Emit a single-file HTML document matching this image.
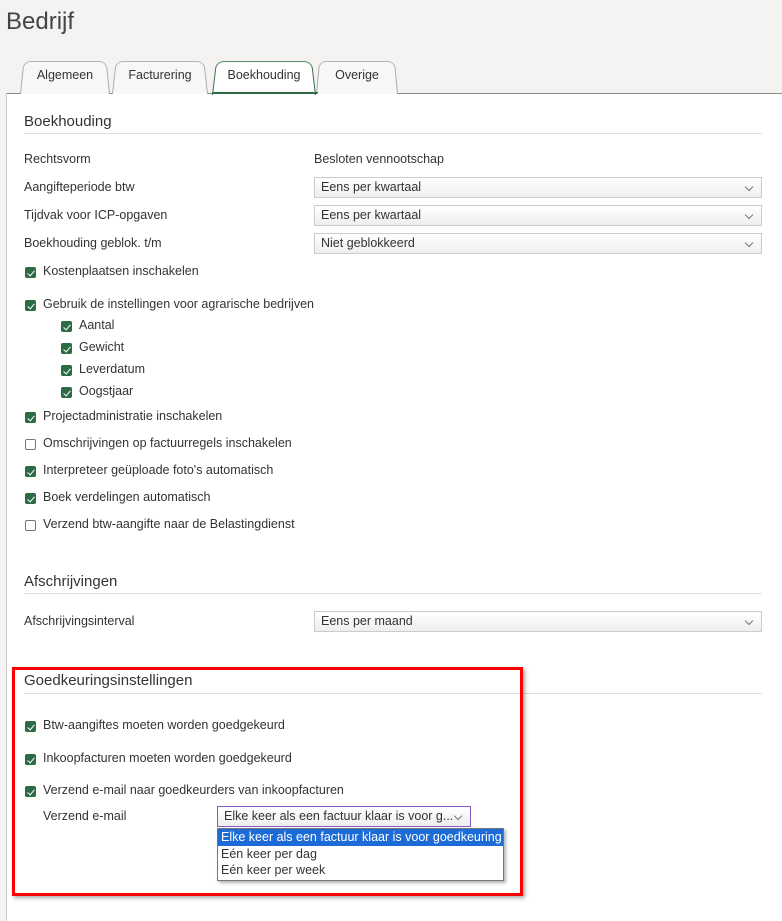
<!DOCTYPE html>
<html><head><meta charset="utf-8"><style>
*{box-sizing:border-box;margin:0;padding:0}
body{width:782px;height:921px;background:#f4f3f1;font-family:"Liberation Sans",sans-serif;font-size:12.5px;color:#333;position:relative;overflow:hidden}
.a{position:absolute;white-space:nowrap}
.t{position:absolute;font-size:12.5px;line-height:16px;white-space:nowrap}
.panel{position:absolute;left:6px;top:93px;width:776px;height:828px;background:#fff;border-left:1px solid #ccc;border-top:1px solid #8a8a8a}
.h{position:absolute;left:24px;font-size:15px;color:#333}
.line{position:absolute;left:24px;width:738px;height:1px;background:#ddd}
.sel{position:absolute;left:314px;width:448px;height:21px;border:1px solid #ccc;background:linear-gradient(#fff,#eee);padding:2px 6px;font-size:12.5px;line-height:15px}
.sel::after{content:"";position:absolute;right:9px;top:6px;width:5px;height:5px;border-right:1px solid #777;border-bottom:1px solid #777;transform:rotate(45deg)}
.cb{position:absolute;width:11px;height:11px;border-radius:2px;background:#2c6b44}
.cb::after{content:"";position:absolute;left:3.5px;top:1.5px;width:3px;height:6px;border-right:1.6px solid #fff;border-bottom:1.6px solid #fff;transform:rotate(40deg)}
.cbo{position:absolute;width:11px;height:11px;border:1px solid #777;border-radius:2px;background:#fff}
.tab{position:absolute;top:58px;height:36px;border:1px solid #aaa;border-bottom:none;border-radius:8px 8px 0 0;background:#f7f7f7;text-align:center;line-height:32px;font-size:12.5px;transform:perspective(60px) rotateX(8deg);transform-origin:bottom}
.tl{position:absolute;top:58px;height:36px;line-height:34px;text-align:center;font-size:12.5px}
</style></head><body>
<div class="a" style="left:6px;top:8px;font-size:24px;color:#444;font-weight:300">Bedrijf</div>
<div class="panel"></div>
<div class="tab" style="left:20px;width:90px"></div>
<div class="tab" style="left:112px;width:96px"></div>
<div class="tab" style="left:316px;width:82px"></div>
<div class="tab" style="left:212px;width:104px;background:#fff;border:1.5px solid #2c6b44;border-bottom:none;height:37px;z-index:2"></div>
<div class="tl" style="left:20px;width:90px">Algemeen</div>
<div class="tl" style="left:112px;width:96px">Facturering</div>
<div class="tl" style="left:212px;width:104px;z-index:3">Boekhouding</div>
<div class="tl" style="left:316px;width:82px">Overige</div>
<div class="a" style="left:212px;top:92px;width:106px;height:2px;background:#2c6b44;border-radius:0 0 4px 4px;z-index:2"></div>

<div class="h" style="top:113px">Boekhouding</div><div class="line" style="top:133px"></div>
<div class="t" style="left:24px;top:151px">Rechtsvorm</div><div class="t" style="left:314px;top:151px">Besloten vennootschap</div>
<div class="t" style="left:24px;top:179px">Aangifteperiode btw</div><div class="sel" style="top:177px">Eens per kwartaal</div>
<div class="t" style="left:24px;top:207px">Tijdvak voor ICP-opgaven</div><div class="sel" style="top:205px">Eens per kwartaal</div>
<div class="t" style="left:24px;top:235px">Boekhouding geblok. t/m</div><div class="sel" style="top:233px">Niet geblokkeerd</div>

<div class="cb" style="left:25px;top:267px"></div><div class="t" style="left:43px;top:263px">Kostenplaatsen inschakelen</div>
<div class="cb" style="left:25px;top:300px"></div><div class="t" style="left:43px;top:296px">Gebruik de instellingen voor agrarische bedrijven</div>
<div class="cb" style="left:61px;top:321px"></div><div class="t" style="left:79px;top:317px">Aantal</div>
<div class="cb" style="left:61px;top:343px"></div><div class="t" style="left:79px;top:339px">Gewicht</div>
<div class="cb" style="left:61px;top:365px"></div><div class="t" style="left:79px;top:361px">Leverdatum</div>
<div class="cb" style="left:61px;top:387px"></div><div class="t" style="left:79px;top:383px">Oogstjaar</div>
<div class="cb" style="left:25px;top:412px"></div><div class="t" style="left:43px;top:408px">Projectadministratie inschakelen</div>
<div class="cbo" style="left:25px;top:439px"></div><div class="t" style="left:43px;top:435px">Omschrijvingen op factuurregels inschakelen</div>
<div class="cb" style="left:25px;top:466px"></div><div class="t" style="left:43px;top:462px">Interpreteer geüploade foto's automatisch</div>
<div class="cb" style="left:25px;top:493px"></div><div class="t" style="left:43px;top:489px">Boek verdelingen automatisch</div>
<div class="cbo" style="left:25px;top:520px"></div><div class="t" style="left:43px;top:516px">Verzend btw-aangifte naar de Belastingdienst</div>

<div class="h" style="top:573px">Afschrijvingen</div><div class="line" style="top:593px"></div>
<div class="t" style="left:24px;top:613px">Afschrijvingsinterval</div><div class="sel" style="top:611px">Eens per maand</div>

<div class="h" style="top:672px">Goedkeuringsinstellingen</div><div class="line" style="top:693px"></div>
<div class="cb" style="left:25px;top:721px"></div><div class="t" style="left:43px;top:717px">Btw-aangiftes moeten worden goedgekeurd</div>
<div class="cb" style="left:25px;top:754px"></div><div class="t" style="left:43px;top:750px">Inkoopfacturen moeten worden goedgekeurd</div>
<div class="cb" style="left:25px;top:786px"></div><div class="t" style="left:43px;top:782px">Verzend e-mail naar goedkeurders van inkoopfacturen</div>
<div class="t" style="left:43px;top:808px">Verzend e-mail</div>
<div class="sel" style="left:217px;top:806px;width:254px;height:21px;border-color:#8a5bc4">Elke keer als een factuur klaar is voor g...</div>
<div class="a" style="left:217px;top:828px;width:287px;height:53px;border:1px solid #777;background:#fff;box-shadow:2px 2px 3px rgba(0,0,0,.3);font-size:12.5px;line-height:16.5px">
<div style="background:#1c6bd6;color:#fff;padding-left:3px">Elke keer als een factuur klaar is voor goedkeuring</div>
<div style="padding-left:3px">Eén keer per dag</div>
<div style="padding-left:3px">Eén keer per week</div>
</div>
<div class="a" style="left:12px;top:667px;width:511px;height:229px;border:3px solid #f00;box-shadow:2px 2px 4px rgba(0,0,0,.35)"></div>
</body></html>
